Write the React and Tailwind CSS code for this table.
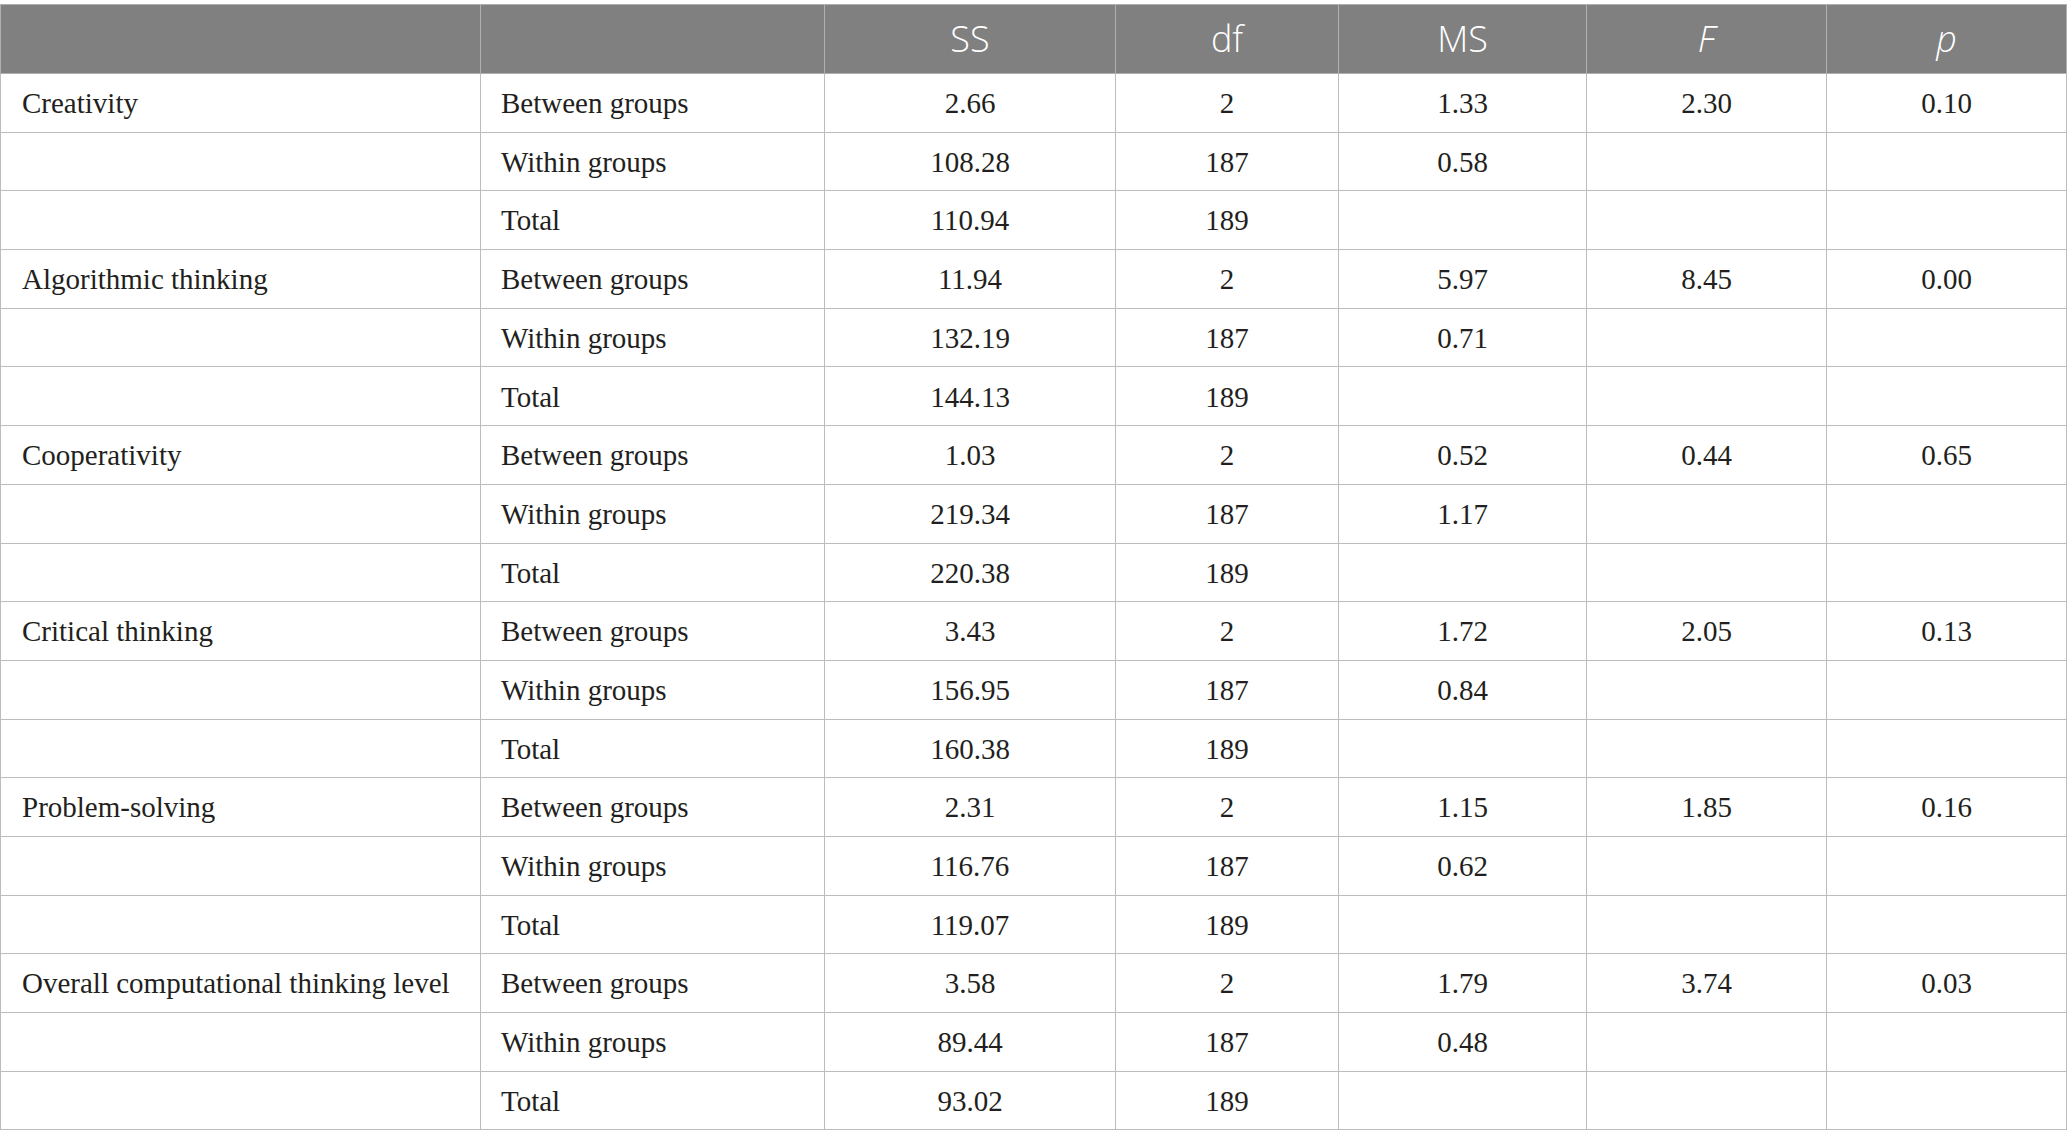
import React from 'react';

const groups = [
  { name: 'Creativity', rows: [['2.66', '2', '1.33', '2.30', '0.10'], ['108.28', '187', '0.58'], ['110.94', '189']] },
  { name: 'Algorithmic thinking', rows: [['11.94', '2', '5.97', '8.45', '0.00'], ['132.19', '187', '0.71'], ['144.13', '189']] },
  { name: 'Cooperativity', rows: [['1.03', '2', '0.52', '0.44', '0.65'], ['219.34', '187', '1.17'], ['220.38', '189']] },
  { name: 'Critical thinking', rows: [['3.43', '2', '1.72', '2.05', '0.13'], ['156.95', '187', '0.84'], ['160.38', '189']] },
  { name: 'Problem-solving', rows: [['2.31', '2', '1.15', '1.85', '0.16'], ['116.76', '187', '0.62'], ['119.07', '189']] },
  { name: 'Overall computational thinking level', rows: [['3.58', '2', '1.79', '3.74', '0.03'], ['89.44', '187', '0.48'], ['93.02', '189']] },
];

const sources = ['Between groups', 'Within groups', 'Total'];

const App = () => {
  return (
    <div className="bg-white w-[2067px] h-[1148px] pt-[4px]" style={{ fontFamily: '"Liberation Serif", "Times New Roman", serif' }}>
      <table className="border-collapse table-fixed w-[2066px] text-[29px] text-[#231f20]">
        <colgroup>
          <col className="w-[480px]" />
          <col className="w-[344px]" />
          <col className="w-[291px]" />
          <col className="w-[223px]" />
          <col className="w-[248px]" />
          <col className="w-[240px]" />
          <col className="w-[240px]" />
        </colgroup>
        <thead>
          <tr className="h-[69px] bg-[#808080] text-white text-[36px] font-light" style={{ fontFamily: '"Open Sans", "Noto Sans", sans-serif' }}>
            <th className="border border-[#b0b0b0] font-light"></th>
            <th className="border border-[#b0b0b0] font-light"></th>
            <th className="border border-[#b0b0b0] font-light text-center">SS</th>
            <th className="border border-[#b0b0b0] font-light text-center">df</th>
            <th className="border border-[#b0b0b0] font-light text-center">MS</th>
            <th className="border border-[#b0b0b0] font-light text-center italic">F</th>
            <th className="border border-[#b0b0b0] font-light text-center italic">p</th>
          </tr>
        </thead>
        <tbody>
          {groups.map((g) =>
            g.rows.map((vals, i) => (
              <tr key={g.name + i} className="h-[58.7px]">
                <td className="border border-[#bcbcbc] pl-[21px] pt-[2px] whitespace-nowrap">{i === 0 ? g.name : ''}</td>
                <td className="border border-[#bcbcbc] pl-[20px] pt-[2px] whitespace-nowrap">{sources[i]}</td>
                {[0, 1, 2, 3, 4].map((c) => (
                  <td key={c} className="border border-[#bcbcbc] pt-[2px] text-center">{vals[c] || ''}</td>
                ))}
              </tr>
            ))
          )}
        </tbody>
      </table>
    </div>
  );
};

export default App;
